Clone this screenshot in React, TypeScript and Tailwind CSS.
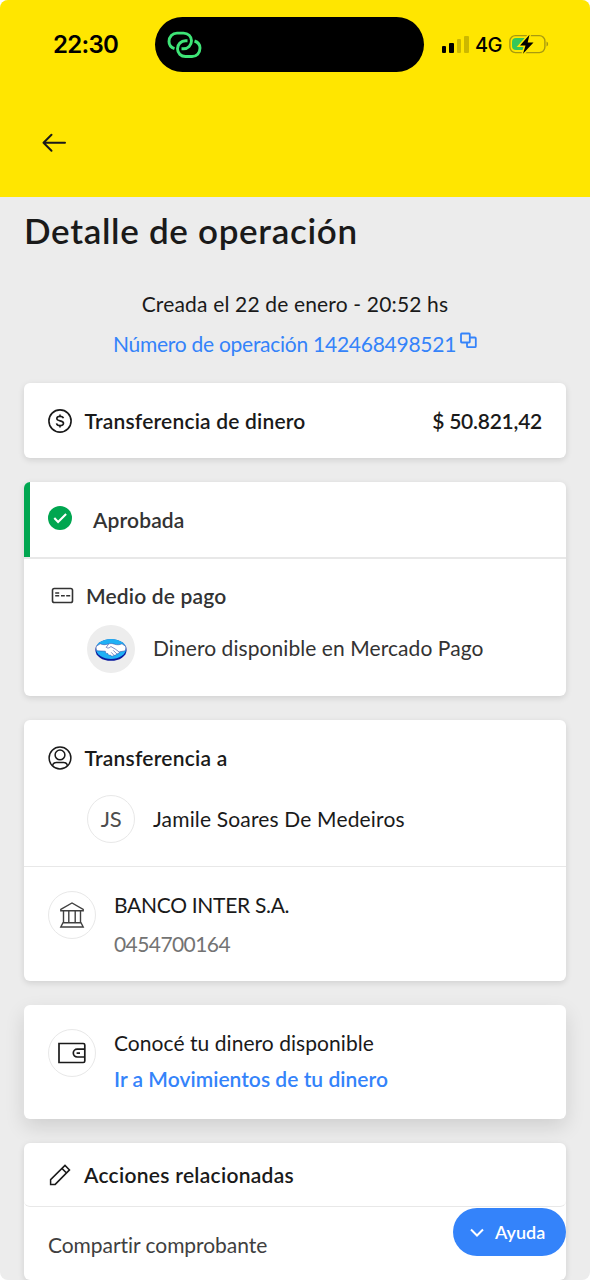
import type { ReactNode } from "react";
import { clsx } from "clsx";

function StatusBar() {
  return (
    <div className="flex h-[55px] items-center">
      <span className="ml-[53px] w-[102px] font-['Inter'] text-[24px] font-semibold leading-none tracking-[-0.7px]">
        22:30
      </span>
      <div className="flex h-[55px] w-[269px] items-center rounded-full bg-black pl-[12px]">
        <svg width="36" height="30" viewBox="0 0 36 30" fill="none" stroke="#3ee577" strokeWidth="2.9">
          <path d="M7.500 18.600C4 17.500 2 14.800 2 11.500 2 6.500 5.500 3.100 10 3.100h6.500c4.500 0 8 3.200 8 7.700s-3.500 8-8 8h-2" />
          <path d="M27.500 11c3.500 1.100 5.500 3.800 5.500 7.100 0 5-3.500 8.400-8 8.400h-6.500c-4.500 0-8-3.200-8-7.700s3.500-8 8-8h2" />
        </svg>
      </div>
      <div className="ml-[17.5px] flex h-[16px] items-end gap-[3px]">
        <i className="h-[7px] w-[4.5px] rounded-[1px] bg-black" />
        <i className="h-[10px] w-[4.5px] rounded-[1px] bg-black" />
        <i className="h-[14px] w-[4.5px] rounded-[1px] bg-[#ccb800]" />
        <i className="h-[17px] w-[4.5px] rounded-[1px] bg-[#ccb800]" />
      </div>
      <span className="ml-[6.5px] w-[34px] font-['Inter'] text-[20px] font-medium leading-none tracking-[-0.6px]">
        4G
      </span>
      <svg width="40" height="22" viewBox="0 0 40 22" fill="none">
        <rect x="0.9" y="1.6" width="35" height="17" rx="5.5" stroke="#a89a10" strokeWidth="1.4" />
        <path d="M37.5 7.500v5c1.200-.5 1.600-1.500 1.600-2.500s-.4-2-1.600-2.500Z" fill="#a89a10" />
        <path d="M7 4h10v12H7a4 4 0 0 1-4-4V8a4 4 0 0 1 4-4Z" fill="#34c759" />
        <path d="M20.500.8 11 11.500h5.500L14 19.800 24.500 8.500h-5.800Z" fill="#000" stroke="#ffe600" strokeWidth="3" />
        <path d="M20.500.8 11 11.500h5.500L14 19.800 24.500 8.500h-5.800Z" fill="#000" />
      </svg>
    </div>
  );
}

function DollarIcon() {
  return (
    <svg width="24" height="24" viewBox="0 0 24 24" fill="none" stroke="#1a1a1a" strokeWidth="1.600">
      <circle cx="12" cy="12" r="11.100" />
      <path d="M15.400 9.300C15.100 8 13.800 7.400 12.100 7.400c-1.900 0-3.300.8-3.300 2.200 0 3.300 6.700 1.300 6.700 4.600 0 1.400-1.500 2.300-3.400 2.300-1.900 0-3.300-.7-3.600-2.200M12 5.400v2M12 16.500v2" />
    </svg>
  );
}

function CheckIcon() {
  return (
    <svg width="24" height="24" viewBox="0 0 24 24" fill="none">
      <circle cx="12" cy="12" r="12" fill="#00a650" />
      <path d="m6.300 12 3.800 3.900 8-7.900" stroke="#fff" strokeWidth="2.100" />
    </svg>
  );
}

function CardIcon() {
  return (
    <svg width="24" height="24" viewBox="0 0 24 24" fill="none" stroke="#333" strokeWidth="1.600">
      <rect x="2.500" y="4.500" width="20" height="14" rx="1.800" />
      <path d="M5.200 9h4M5.200 11.700h4M11 11.700h3.800M16.200 11.700h4" />
    </svg>
  );
}

function UserIcon() {
  return (
    <svg width="24" height="24" viewBox="0 0 24 24" fill="none" stroke="#1a1a1a" strokeWidth="1.500">
      <circle cx="12" cy="12" r="10.900" />
      <circle cx="12" cy="8.900" r="4.900" />
      <path d="M4.600 20c.2-2.200 1.700-3.400 3.700-3.400h7.400c2 0 3.500 1.200 3.700 3.400" />
    </svg>
  );
}

function BankIcon() {
  return (
    <svg width="26" height="28" viewBox="0 0 26 28" fill="none" stroke="#404040" strokeWidth="1.400">
      <path d="M1.800 8.400 13 2l11.200 6.400v1.400H1.800ZM4.500 10v11M9.800 10v11M16.200 10v11M21.500 10v11M4 21.800h18l2.200 4.200H1.800Z" />
    </svg>
  );
}

function WalletIcon() {
  return (
    <svg width="28" height="22" viewBox="0 0 28 22" fill="none" stroke="#1a1a1a" strokeWidth="1.700">
      <path d="M1 1.500h24.200c1 0 1.600.6 1.600 1.600v15.800c0 1-.6 1.600-1.600 1.600H1Z" />
      <path d="M26.800 7.200h-7.600a3.900 3.900 0 0 0 0 7.800h7.600M18.600 11.100h3.400" />
    </svg>
  );
}

function PencilIcon() {
  return (
    <svg width="24" height="24" viewBox="0 0 24 24" fill="none" stroke="#1a1a1a" strokeWidth="1.500">
      <path d="M2.600 21.400v-4.800L17 2.400l4.500 4.500L7.200 21.400ZM13.900 5.400l4.600 4.600" />
    </svg>
  );
}

function HandshakeLogo() {
  return (
    <svg width="32" height="23" viewBox="0 0 32 23">
      <ellipse cx="16" cy="12" rx="15.600" ry="10.800" fill="#0a1a9c" />
      <ellipse cx="16" cy="10.900" rx="15" ry="10" fill="#1fb0f5" />
      <path
        d="M1.300 8.300 5.200 5.800c3 1.300 5.600 1 8.200.2 1.800-.6 3.800-.6 5.600.1 3 1 5.400.9 8-.3l3.700 2.600c.3 2.100-.2 3.800-1 4.500l-5.200.9c-.4 1.600-1.500 2.300-2.800 2-.7 1.400-1.700 1.800-2.700 1.400-.9 1.300-2.800 1.300-3.700-.1-1.400.4-2.300-.4-2.500-1.600-1.600.3-2.800-1-2.400-2.300L2 12.800C1.200 11.500.9 10 1.300 8.300Z"
        fill="#fff"
        stroke="#2a3f9e"
        strokeWidth="0.500"
      />
      <path d="M13.600 6.200 11.200 9.300c1.500 1.200 3.400.8 4.700-.8 3 1.600 6 3.500 8.300 5.500M18.200 12.300l3.500 3.500M16.200 14.300l2.600 2.800" fill="none" stroke="#2a3f9e" strokeWidth="0.600" />
    </svg>
  );
}

function Card({ className, children }: { className?: string; children: ReactNode }) {
  return (
    <section className={clsx("rounded-[6px] bg-white", className)}>
      {children}
    </section>
  );
}

function Avatar({ className, children }: { className?: string; children: ReactNode }) {
  return (
    <div className={clsx("flex size-12 shrink-0 items-center justify-center rounded-full", className)}>
      {children}
    </div>
  );
}

export default function App() {
  return (
    <div className="h-[1280px] w-[590px] bg-white">
      <div className="relative h-full overflow-hidden rounded-[8px] bg-[#ececec] font-['Lato',sans-serif] text-[21px] leading-[28px] text-[#1a1a1a]">
        <header className="h-[197px] bg-[#ffe600] pt-[17px] text-black">
          <StatusBar />
          <svg className="mt-[58px] ml-[40px]" width="28" height="26" viewBox="0 0 28 26" fill="none" stroke="#1a1a1a" strokeWidth="2" strokeLinecap="round" strokeLinejoin="round">
            <path d="M25 12.800H3.500M11.500 4.800l-8 8 8 8" />
          </svg>
        </header>

        <main className="px-6">
          <h1 className="mt-[9px] h-[48px] text-[35px] font-semibold leading-[48px] tracking-[0.68px]">Detalle de operación</h1>
          <p className="mt-[36px] text-center tracking-[0.16px]">Creada el 22 de enero - 20:52 hs</p>
          <p className="mt-[12px] flex justify-center text-[#3483fa]">
            <span className="tracking-[-0.26px]">Número de operación 142468498521</span>
            <svg className="mt-[2px] ml-[4px]" width="17" height="17" viewBox="0 0 17 17" fill="none" stroke="#3483fa" strokeWidth="1.800">
              <rect x="1" y="1.500" width="8.800" height="9" rx="0.800" />
              <path d="M9.800 5.500h5a1 1 0 0 1 1 1v7.700a1 1 0 0 1-1 1H8a1 1 0 0 1-1-1v-3.700" />
            </svg>
          </p>

          <Card className="mt-[25px] flex h-[75px] items-center px-6 shadow-[0_2px_6px_rgba(0,0,0,0.12)]">
            <DollarIcon />
            <span className="ml-[12.5px] font-semibold tracking-[0.19px]">Transferencia de dinero</span>
            <span className="ml-auto font-semibold tracking-[-0.25px]">$ 50.821,42</span>
          </Card>

          <Card className="mt-6 h-[214px] overflow-hidden shadow-[0_2px_6px_rgba(0,0,0,0.12)]">
            <div className="flex h-[75px] items-center border-l-6 border-[#00a650] pl-[18px] text-[#333]">
              <div className="mb-[3px]">
                <CheckIcon />
              </div>
              <span className="ml-[21px] font-semibold tracking-[0.14px]">Aprobada</span>
            </div>
            <div className="border-t-2 border-[#e8e8e8] px-6 pt-[23px] text-[#333]">
              <div className="flex h-[28px] items-center pl-[2px]">
                <CardIcon />
                <h2 className="ml-[12px] font-semibold tracking-[0.17px]">Medio de pago</h2>
              </div>
              <div className="mt-[15px] ml-[39px] flex items-center gap-[18px]">
                <Avatar className="bg-[#ededed]">
                  <HandshakeLogo />
                </Avatar>
                <span className="pb-[2px] tracking-[0.07px]">Dinero disponible en Mercado Pago</span>
              </div>
            </div>
          </Card>

          <Card className="mt-6 h-[261px] pt-6 shadow-[0_2px_6px_rgba(0,0,0,0.12)]">
            <div className="flex h-[28px] items-center px-6">
              <UserIcon />
              <h2 className="ml-[12.5px] font-semibold tracking-[0.22px]">Transferencia a</h2>
            </div>
            <div className="mt-[23px] ml-[63px] flex items-center gap-[18px]">
              <Avatar className="border border-[#e8e8e8] text-[22px] tracking-[-0.3px] text-[#4d4d4d]">JS</Avatar>
              <span className="pb-px tracking-[0.16px]">Jamile Soares De Medeiros</span>
            </div>
            <div className="mt-[23px] flex border-t border-[#e8e8e8] px-6 pt-6">
              <Avatar className="border border-[#e8e8e8]">
                <BankIcon />
              </Avatar>
              <div className="ml-[18px]">
                <p className="tracking-[-0.3px]">BANCO INTER S.A.</p>
                <p className="mt-[11px] tracking-[-0.58px] text-[#737373]">0454700164</p>
              </div>
            </div>
          </Card>

          <Card className="mt-6 flex h-[114px] px-6 pt-6 shadow-[0_8px_20px_rgba(0,0,0,0.12)]">
            <Avatar className="border border-[#e8e8e8]">
              <WalletIcon />
            </Avatar>
            <div className="ml-[18px]">
              <p className="tracking-[0.05px]">Conocé tu dinero disponible</p>
              <p className="mt-[8px] font-semibold tracking-[0.03px] text-[#3483fa]">Ir a Movimientos de tu dinero</p>
            </div>
          </Card>

          <Card className="mt-6 h-[137px] shadow-[0_2px_6px_rgba(0,0,0,0.12)]">
            <div className="flex h-[64px] items-center rounded-b-[6px] border-b border-[#e8e8e8] px-6">
              <PencilIcon />
              <h2 className="ml-[12px] font-semibold tracking-[0.29px]">Acciones relacionadas</h2>
            </div>
            <p className="px-6 pt-[24px] tracking-[-0.05px] text-[#404040]">Compartir comprobante</p>
          </Card>
        </main>

        <button className="absolute top-[1208px] right-[24px] flex h-[48px] w-[113px] items-center rounded-full bg-[#3483fa] text-[18px] font-semibold text-white">
          <svg className="ml-[16px]" width="16" height="16" viewBox="0 0 16 16" fill="none" stroke="#fff" strokeWidth="2">
            <path d="m2 5.500 6 6 6-6" />
          </svg>
          <span className="ml-[10px] pb-px">Ayuda</span>
        </button>
      </div>
    </div>
  );
}
